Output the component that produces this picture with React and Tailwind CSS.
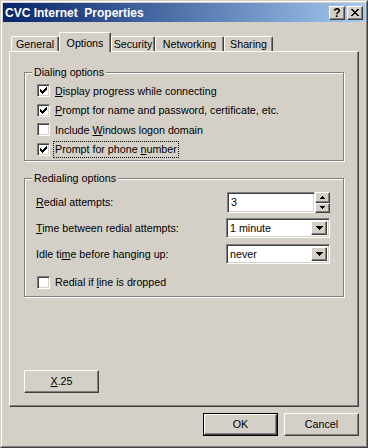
import React from "react";

const raised =
  "border border-t-white border-l-white border-r-[#404040] border-b-[#404040] shadow-[inset_-1px_-1px_0_#808080]";
const sunken =
  "border border-t-[#808080] border-l-[#808080] border-r-white border-b-white shadow-[inset_1px_1px_0_#404040,inset_-1px_-1px_0_#d4d0c8]";

function Check() {
  return (
    <svg width="7" height="7" viewBox="0 0 7 7" shapeRendering="crispEdges">
      <rect x="0" y="2" width="1" height="3" fill="#000" />
      <rect x="1" y="3" width="1" height="3" fill="#000" />
      <rect x="2" y="4" width="1" height="3" fill="#000" />
      <rect x="3" y="3" width="1" height="3" fill="#000" />
      <rect x="4" y="2" width="1" height="3" fill="#000" />
      <rect x="5" y="1" width="1" height="3" fill="#000" />
      <rect x="6" y="0" width="1" height="3" fill="#000" />
    </svg>
  );
}

function Checkbox({ checked }) {
  return (
    <span
      className={`w-[13px] h-[13px] shrink-0 bg-white flex items-center justify-center ${sunken}`}
    >
      {checked ? <Check /> : null}
    </span>
  );
}

function DownArrow() {
  return (
    <svg width="7" height="4" viewBox="0 0 7 4" shapeRendering="crispEdges">
      <rect x="0" y="0" width="7" height="1" fill="#000" />
      <rect x="1" y="1" width="5" height="1" fill="#000" />
      <rect x="2" y="2" width="3" height="1" fill="#000" />
      <rect x="3" y="3" width="1" height="1" fill="#000" />
    </svg>
  );
}

function Combo({ value }) {
  return (
    <div
      className={`w-[104px] h-[20px] bg-white flex items-center p-[2px] ${sunken}`}
    >
      <span className="flex-1 pl-[1px] leading-none">{value}</span>
      <span
        className={`w-[16px] h-full bg-[#d4d0c8] flex items-center justify-center ${raised}`}
      >
        <DownArrow />
      </span>
    </div>
  );
}

function Spin({ value }) {
  return (
    <div className="flex items-stretch h-[21px]">
      <div
        className={`w-[88px] h-full bg-white flex items-center pl-[3px] ${sunken}`}
      >
        {value}
      </div>
      <div className="w-[15px] flex flex-col">
        <span
          className={`flex-1 bg-[#d4d0c8] flex items-center justify-center ${raised}`}
        >
          <svg width="5" height="3" viewBox="0 0 5 3" shapeRendering="crispEdges">
            <rect x="2" y="0" width="1" height="1" fill="#000" />
            <rect x="1" y="1" width="3" height="1" fill="#000" />
            <rect x="0" y="2" width="5" height="1" fill="#000" />
          </svg>
        </span>
        <span
          className={`flex-1 bg-[#d4d0c8] flex items-center justify-center ${raised}`}
        >
          <svg width="5" height="3" viewBox="0 0 5 3" shapeRendering="crispEdges">
            <rect x="0" y="0" width="5" height="1" fill="#000" />
            <rect x="1" y="1" width="3" height="1" fill="#000" />
            <rect x="2" y="2" width="1" height="1" fill="#000" />
          </svg>
        </span>
      </div>
    </div>
  );
}

function Group({ title, className, children }) {
  return (
    <div
      className={`relative border border-[#808080] shadow-[inset_1px_1px_0_#ffffff,1px_1px_0_#ffffff] ${className}`}
    >
      <span className="absolute left-[7px] top-[-8px] bg-[#d4d0c8] px-[2px] leading-[14px]">
        {title}
      </span>
      {children}
    </div>
  );
}

function Tab({ label, w, selected }) {
  if (selected) {
    return (
      <div
        className={`relative z-10 h-[20px] mb-[-1px] bg-[#d4d0c8] rounded-t-[2px] border-t border-l border-t-white border-l-white border-r border-r-[#404040] shadow-[inset_-1px_0_0_#808080] flex items-start justify-center pt-[2px] ${w}`}
      >
        {label}
      </div>
    );
  }
  return (
    <div
      className={`h-[15px] bg-[#d4d0c8] rounded-t-[2px] border-t border-l border-t-white border-l-white border-r border-r-[#404040] shadow-[inset_-1px_0_0_#808080] flex items-center justify-center ${w}`}
    >
      {label}
    </div>
  );
}

function Row({ checked, children }) {
  return (
    <div className="h-[19.5px] flex items-center gap-[5px]">
      <Checkbox checked={checked} />
      {children}
    </div>
  );
}

export default function App() {
  return (
    <div
      className="w-[368px] h-[448px] bg-[#d4d0c8] border border-t-[#d4d0c8] border-l-[#d4d0c8] border-r-[#404040] border-b-[#404040] text-[10.7px] text-black"
      style={{ fontFamily: '"Liberation Sans", Arial, sans-serif' }}
    >
      <div className="h-full border border-t-white border-l-white border-r-[#808080] border-b-[#808080] p-px flex flex-col">
        {/* Title bar */}
        <div className="h-[19px] bg-gradient-to-r from-[#0a246a] to-[#a6caf0] flex items-center pl-[2px] pr-[2px]">
          <span className="flex-1 text-white font-bold text-[12px] whitespace-pre leading-none">
            CVC Internet  Properties
          </span>
          <div className="flex gap-[2px]">
            <span
              className={`w-[16px] h-[14px] bg-[#d4d0c8] flex items-center justify-center font-bold text-[12px] leading-none ${raised}`}
            >
              ?
            </span>
            <span
              className={`w-[16px] h-[14px] bg-[#d4d0c8] flex items-center justify-center ${raised}`}
            >
              <svg width="8" height="7" viewBox="0 0 8 7" shapeRendering="crispEdges">
                <rect x="0" y="0" width="2" height="1" fill="#000" />
                <rect x="6" y="0" width="2" height="1" fill="#000" />
                <rect x="1" y="1" width="2" height="1" fill="#000" />
                <rect x="5" y="1" width="2" height="1" fill="#000" />
                <rect x="2" y="2" width="4" height="1" fill="#000" />
                <rect x="3" y="3" width="2" height="1" fill="#000" />
                <rect x="2" y="4" width="4" height="1" fill="#000" />
                <rect x="1" y="5" width="2" height="1" fill="#000" />
                <rect x="5" y="5" width="2" height="1" fill="#000" />
                <rect x="0" y="6" width="2" height="1" fill="#000" />
                <rect x="6" y="6" width="2" height="1" fill="#000" />
              </svg>
            </span>
          </div>
        </div>

        {/* Tabs */}
        <div className="mt-[10px] ml-[8px] h-[19px] flex items-end">
          <Tab label="General" w="w-[48px]" />
          <Tab label="Options" w="w-[52px]" selected />
          <Tab label="Security" w="w-[44px]" />
          <Tab label="Networking" w="w-[69px]" />
          <Tab label="Sharing" w="w-[49px]" />
        </div>

        {/* Panel */}
        <div className="ml-[6px] w-[350px] h-[356px] border border-t-white border-l-white border-r-[#404040] border-b-[#404040] shadow-[inset_-1px_-1px_0_#808080] flex flex-col px-[14px] pt-[20px] pb-[13px]">
          <Group title="Dialing options" className="h-[89px] pt-[8px] pl-[12px]">
            <Row checked>
              <span>
                <u>D</u>isplay progress while connecting
              </span>
            </Row>
            <Row checked>
              <span>
                <u>P</u>rompt for name and password, certificate, etc.
              </span>
            </Row>
            <Row>
              <span>
                Include <u>W</u>indows logon domain
              </span>
            </Row>
            <Row checked>
              <span className="border border-dotted border-black px-[1px] ml-[-2px] leading-[15px]">
                Prompt for phone <u>n</u>umber
              </span>
            </Row>
          </Group>

          <Group
            title="Redialing options"
            className="mt-[17px] h-[119px] pt-[13px] pl-[11px] pr-[13px] flex flex-col"
          >
            <div className="flex items-center h-[21px]">
              <span className="flex-1">
                <u>R</u>edial attempts:
              </span>
              <Spin value="3" />
            </div>
            <div className="flex items-center h-[20px] mt-[5px]">
              <span className="flex-1">
                <u>T</u>ime between redial attempts:
              </span>
              <Combo value="1 minute" />
            </div>
            <div className="flex items-center h-[20px] mt-[6px]">
              <span className="flex-1">
                Idle ti<u>m</u>e before hanging up:
              </span>
              <Combo value="never" />
            </div>
            <div className="flex items-center h-[20px] mt-[8px] gap-[5px] pl-[1px]">
              <Checkbox />
              <span>
                Redial if <u>l</u>ine is dropped
              </span>
            </div>
          </Group>

          <div className="mt-auto">
            <button
              className={`w-[75px] h-[23px] bg-[#d4d0c8] flex items-center justify-center ${raised}`}
            >
              <span>
                <u>X</u>.25
              </span>
            </button>
          </div>
        </div>

        {/* Bottom buttons */}
        <div className="mt-[6px] ml-[6px] w-[350px] flex justify-end gap-[6px]">
          <button className="w-[75px] h-[23px] border border-black bg-[#d4d0c8] p-0">
            <span
              className={`w-full h-full flex items-center justify-center ${raised}`}
            >
              OK
            </span>
          </button>
          <button
            className={`w-[75px] h-[23px] bg-[#d4d0c8] flex items-center justify-center ${raised}`}
          >
            Cancel
          </button>
        </div>
      </div>
    </div>
  );
}
